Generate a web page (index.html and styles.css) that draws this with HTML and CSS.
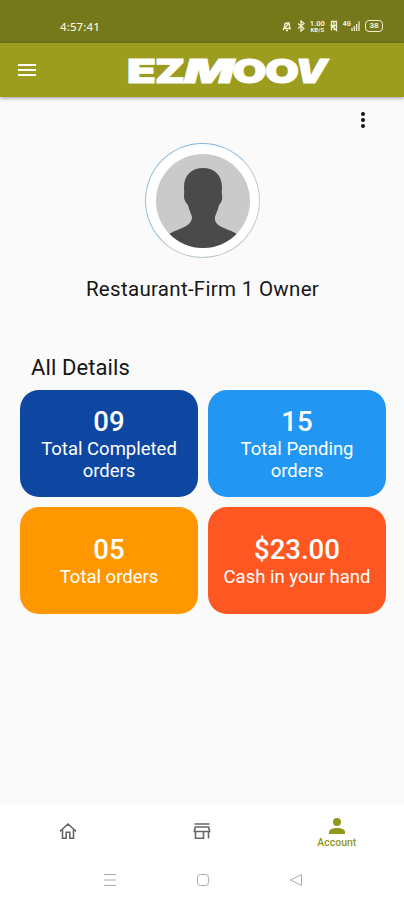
FILE: index.html
```
<!DOCTYPE html>
<html lang="en">
<head>
    <meta charset="UTF-8">
    <meta name="viewport" content="width=device-width, initial-scale=1.0">
    <title>EZMOOV - Account</title>
    <link rel="stylesheet" href="styles.css">
</head>
<body>

    <div class="status-bar">
        <span class="time">4:57:41</span>
        <div class="status-icons">
            <svg width="10" height="12" viewBox="0 0 10 12"><path d="M2.500 8V5.500a2.500 2.500 0 0 1 5 0V8M1 8.500h8M4 10.500h2M1 10 7.500 2.500"/></svg>
            <svg width="8" height="12" viewBox="0 0 8 12"><path d="m1 3.500 6 5L4 11V1l3 2.500-6 5"/></svg>
            <span class="net-speed"><b>1.00</b><b>KB/S</b></span>
            <svg width="8" height="12" viewBox="0 0 8 12"><path d="M1.500 10.500v-9h5v4h-5l5 5v-5M4 2v8"/></svg>
            <span class="signal">
                <small>4G</small>
                <svg width="9" height="12" viewBox="0 0 9 12"><path d="M1 11V8M3.300 11V6M5.600 11V4M8 11V1.500"/></svg>
            </span>
            <span class="battery">38</span>
        </div>
    </div>

    <header>
        <button class="icon-button" aria-label="Menu">
            <svg width="18" height="14" viewBox="0 0 18 14"><path d="M0 2h18M0 7h18M0 12h18" stroke="#fff" stroke-width="2"/></svg>
        </button>
        <svg class="logo" width="202" height="27" viewBox="0 0 202 27" role="img" aria-label="EZMOOV">
            <text x="-1" y="25.500" textLength="29" lengthAdjust="spacingAndGlyphs">E</text>
            <text x="27" y="25.500" textLength="30" lengthAdjust="spacingAndGlyphs">Z</text>
            <text class="slant" x="56" y="25.500" textLength="50" lengthAdjust="spacingAndGlyphs">M</text>
            <text x="104.500" y="25.500" textLength="34" lengthAdjust="spacingAndGlyphs">O</text>
            <text x="137" y="25.500" textLength="34" lengthAdjust="spacingAndGlyphs">O</text>
            <text class="slant" x="167" y="25.500" textLength="32" lengthAdjust="spacingAndGlyphs">V</text>
        </svg>
    </header>

    <main>
        <button class="more" aria-label="More options"><i></i><i></i><i></i></button>

        <section class="profile">
            <div class="avatar">
                <svg width="94" height="94" viewBox="0 0 94 94">
                    <clipPath id="round"><circle cx="47" cy="47" r="47"/></clipPath>
                    <g clip-path="url(#round)">
                        <rect width="94" height="94" fill="#cacaca"/>
                        <path fill="#4a4a4a" d="M47 14c-11 0-19 7-19 19 0 3 .5 5 0 8-.5 4 2 8 4 10 1 5 3 8 4 12 0 6-5 9-10 11-6 3-12 4-16 9v11h74V83c-4-5-10-6-16-9-5-2-10-5-9-11 1-4 3-7 4-12 2-2 4-6 3-10-.5-3 0-5 0-8 0-12-8-19-19-19z"/>
                    </g>
                </svg>
            </div>
            <h1>Restaurant-Firm 1 Owner</h1>
        </section>

        <section class="details">
            <h2>All Details</h2>
            <div class="cards">
                <div class="card completed">
                    <strong>09</strong>
                    <p>Total Completed orders</p>
                </div>
                <div class="card pending">
                    <strong>15</strong>
                    <p>Total Pending orders</p>
                </div>
                <div class="card total">
                    <strong>05</strong>
                    <p>Total orders</p>
                </div>
                <div class="card cash">
                    <strong>$23.00</strong>
                    <p>Cash in your hand</p>
                </div>
            </div>
        </section>
    </main>

    <nav class="tabs">
        <a class="tab" aria-label="Home">
            <svg width="18" height="18" viewBox="0 0 18 18"><path d="M1 9.300 9 2l8 7.300M3.500 8v8.200h3.700v-6h3.600v6h3.700V8"/></svg>
        </a>
        <a class="tab" aria-label="Store">
            <svg width="20" height="18" viewBox="0 0 20 18"><path d="M2.500 2h15M3.300 5h13.400l1 4.500H2.300zM3.500 9.500v6.700h8V9.500M16.500 9.500v7"/></svg>
        </a>
        <a class="tab current">
            <svg width="16" height="16" viewBox="0 0 16 16"><circle cx="8" cy="4" r="4"/><path d="M0 16v-2c0-2.700 4-4 8-4s8 1.300 8 4v2z"/></svg>
            <span>Account</span>
        </a>
    </nav>

    <div class="system-nav">
        <svg width="14" height="14" viewBox="0 0 14 14"><path d="M1 1.500h12M1 7h12M1 12.500h12"/></svg>
        <svg width="14" height="14" viewBox="0 0 14 14"><rect x="1.500" y="1.500" width="11" height="11" rx="3"/></svg>
        <svg width="14" height="14" viewBox="0 0 14 14"><path d="M12.500 1.500v11L1.500 7z"/></svg>
    </div>

</body>
</html>
```
FILE: styles.css
```
body {
    font-family: Roboto, sans-serif;
    margin: 0;
    height: 900px;
    display: flex;
    flex-direction: column;
    background: #fafafa;
    color: #161616;
}
button {
    background: none;
    border: none;
    padding: 0;
}
svg {
    display: block;
    fill: none;
}
.status-bar {
    height: 43px;
    box-sizing: border-box;
    padding: 9px 21px 0 60px;
    display: flex;
    align-items: center;
    justify-content: space-between;
    background: #75781b;
    color: #f3f2d5;
}
.time {
    font: 500 11.5px "Noto Sans", sans-serif;
    letter-spacing: 0.1px;
}
.status-icons {
    display: flex;
    align-items: center;
    gap: 5px;
}
.status-icons svg {
    stroke: #f0efcb;
    stroke-width: 1.3;
}
.net-speed {
    display: flex;
    flex-direction: column;
    align-items: center;
    width: 15px;
    font-size: 7.5px;
    line-height: 7px;
}
.net-speed b + b {
    font-size: 6px;
    line-height: 6px;
}
.signal {
    display: flex;
}
.signal small {
    font-size: 6.5px;
    line-height: 8px;
    font-weight: bold;
}
.battery {
    width: 16px;
    height: 10px;
    border: 1px solid #f0efcb;
    border-radius: 4px;
    font-size: 8px;
    font-weight: bold;
    line-height: 10px;
    text-align: center;
}
header {
    height: 54px;
    flex-shrink: 0;
    display: flex;
    align-items: center;
    padding-left: 18px;
    background: #9c9c1f; /* Olive */
    box-shadow: 0 1px 4px rgba(0, 0, 0, 0.4);
}
.logo {
    margin-left: 92px;
    overflow: visible;
}
.logo text {
    font-family: Inter, sans-serif;
    font-size: 33px;
    font-weight: 900;
    fill: #fff;
    stroke: #fff;
    stroke-width: 1;
}
.logo .slant {
    font-style: italic;
}
main {
    flex: 1;
    display: flex;
    flex-direction: column;
}
.more {
    align-self: flex-end;
    margin: 15px 39px 0 0;
    display: flex;
    flex-direction: column;
    gap: 2px;
}
.more i {
    width: 4px;
    height: 4px;
    border-radius: 50%;
    background: #111;
}
.profile {
    display: flex;
    flex-direction: column;
    align-items: center;
    margin-top: 15px;
    padding-left: 1px;
}
.avatar {
    width: 113px;
    height: 113px;
    display: flex;
    align-items: center;
    justify-content: center;
    border: 1px solid;
    border-color: #82b4df #c8c8cc #bcc8c8 #93bfd8;
    border-radius: 50%;
    background: #fff;
}
h1, h2 {
    margin: 0;
    font-weight: 400;
}
h1 {
    margin-top: 18px;
    font-size: 20.5px;
    line-height: 26px;
    letter-spacing: 0.3px;
}
.details {
    margin: 53px 18px 0 20px;
}
h2 {
    padding-left: 11px;
    font-size: 22px;
    line-height: 26px;
    letter-spacing: 0.1px;
}
.cards {
    display: grid;
    grid-template-columns: 1fr 1fr;
    grid-auto-rows: 107px;
    gap: 10px;
    margin-top: 9px;
}
.card {
    display: flex;
    flex-direction: column;
    align-items: center;
    justify-content: center;
    padding: 0 12px;
    border-radius: 19px;
    color: #fff;
    text-align: center;
}
.card strong {
    font-size: 27.5px;
    font-weight: 500;
    line-height: 32px;
}
.card p {
    margin: 0;
    font-size: 18.5px;
    line-height: 22px;
}
.completed {
    background: #0d47a1;
}
.pending {
    background: #2196f3;
}
.total {
    background: #ff9800;
}
.cash {
    background: #ff5722;
}
.tabs {
    height: 54px;
    display: grid;
    grid-template-columns: repeat(3, 1fr);
    padding-left: 1px;
    background: #fff;
}
.tab {
    display: flex;
    flex-direction: column;
    align-items: center;
    justify-content: center;
}
.tab svg {
    stroke: #666;
    stroke-width: 1.6;
}
.tab.current {
    padding-top: 4px;
}
.tab.current svg {
    fill: #92971b;
    stroke: none;
}
.current span {
    margin-top: 3px;
    font-size: 10.5px;
    font-weight: 500;
    line-height: 12px;
    color: #92971b;
}
.system-nav {
    height: 42px;
    display: flex;
    justify-content: center;
    align-items: center;
    gap: 79px;
    padding: 1px 0 0 1px;
    box-sizing: border-box;
    background: #fff;
}
.system-nav svg {
    stroke: #aaa;
}
```
